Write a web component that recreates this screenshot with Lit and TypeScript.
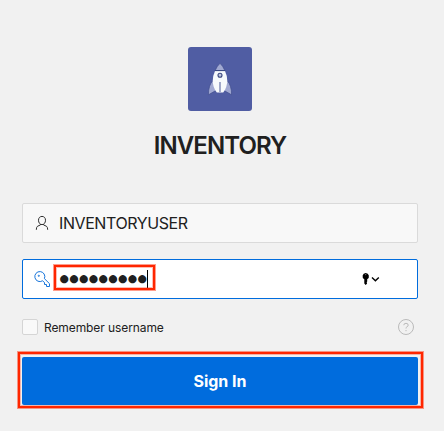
import { LitElement, html, css } from "lit";
import { customElement, property } from "lit/decorators.js";

@customElement("app-root")
export class AppRoot extends LitElement {
  @property() username = "INVENTORYUSER";
  @property({ type: Number }) passwordLength = 9;

  static styles = css`
    :host {
      display: flex;
      flex-direction: column;
      box-sizing: border-box;
      height: 431px;
      padding: 47px 26px 0 22px;
      background: #f1f1f1;
      color: #202020;
      font-family: Inter, "Liberation Sans", sans-serif;
      overflow: hidden;
    }
    * { box-sizing: border-box; }
    svg { display: block; flex: none; }
    .logo {
      width: 64px;
      height: 64px;
      align-self: center;
      border-radius: 3px;
      background: #505da3;
    }
    h1 {
      margin: 19px 0 41px;
      height: 32px;
      text-align: center;
      font-size: 24px;
      line-height: 32px;
      font-weight: 600;
      letter-spacing: -0.9px;
      white-space: nowrap;
    }
    .field {
      position: relative;
      display: flex;
      align-items: center;
      height: 40px;
      margin-bottom: 16px;
      padding: 0 37px 0 11px;
      border: 1px solid #dadada;
      border-radius: 2px;
      background: #f8f8f8;
      font-size: 16px;
      white-space: nowrap;
    }
    .field.focused {
      border-color: #006cdd;
      background: #fff;
    }
    .value { margin-left: 9px; flex: 1; letter-spacing: -0.42px; }
    .dots {
      display: flex;
      align-items: center;
      margin-left: 9.4px;
      flex: 1;
      font: 10.8px/20px "DejaVu Sans", sans-serif;
    }
    .dots b { width: 9.75px; font-weight: 400; text-align: center; }
    .caret { width: 1px; height: 18px; margin-left: -0.4px; background: #000; }
    .mark {
      position: absolute;
      border: 2px solid #ff2600;
      box-shadow: 0 0 0 1px rgba(255, 38, 0, 0.45), inset 0 0 0 1px rgba(255, 38, 0, 0.3);
      pointer-events: none;
    }
    .mark.password { left: 31px; top: 5px; width: 101px; height: 25px; }
    .options {
      display: flex;
      align-items: center;
      height: 16px;
      margin: 4px 4px 0 0;
      font-size: 12px;
    }
    .check {
      width: 16px;
      height: 16px;
      border: 1px solid #d5d5d5;
      border-radius: 2px;
      background: #f9f9f9;
    }
    .label { margin-left: 6px; flex: 1; letter-spacing: -0.09px; }
    .submit {
      position: relative;
      display: flex;
      align-items: center;
      justify-content: center;
      height: 48px;
      margin-top: 22px;
      border-radius: 2px;
      background: #006cdd;
      color: #fff;
      font-size: 16px;
      font-weight: 700;
    }
    .mark.button { left: -4px; top: -5px; right: -5px; bottom: -3px; }
  `;

  render() {
    return html`
      <svg class="logo" viewBox="0 0 64 64">
        <path d="M27.1 23.6Q29 19 32 16.3Q35 19 36.9 23.6ZM25 33.5Q20.4 38 20.4 47.8L28 43.5ZM39 33.5Q43.6 38 43.6 47.8L36 43.5Z" fill="#a1a9d2" stroke="#414d8c" stroke-width=".7"/>
        <path d="M27 24H37Q39.2 28.5 39.3 34Q39 41 35.2 45.5H28.8Q25 41 24.7 34Q24.8 28.5 27 24Z" fill="#f7fafc"/>
        <path d="M26.8 23.6H37.2" stroke="#39477f"/>
        <circle cx="32" cy="28.3" r="2" fill="#c1c7df" stroke="#39477f" stroke-width="1.1"/>
        <path d="M32 35V45" stroke="#7b86b5" stroke-width="1.4"/>
      </svg>
      <h1>INVENTORY</h1>
      <div class="field">
        <svg width="16" height="16" viewBox="0 0 16 16" fill="none" stroke="#303030">
          <path d="M8 1.4C6 1.4 4.5 2.8 4.5 5.2C4.5 7.8 6 9.6 8 9.6S11.5 7.8 11.5 5.2C11.5 2.8 10 1.4 8 1.4ZM6.4 9.1V10L3.6 11.2Q2.3 12 2.3 14.8M9.6 9.1V10L12.4 11.2Q13.7 12 13.7 14.8"/>
        </svg>
        <span class="value">${this.username}</span>
      </div>
      <div class="field focused">
        <svg width="16" height="16" viewBox="0 0 16 16" fill="none" stroke="#1674da">
          <path d="M10.4 7.6L15.5 12.7V15.5H12.5V13.5H10.5V11.5L8.5 9.8A5 5 0 1 1 10.4 7.6Z"/>
          <circle cx="4.8" cy="4.8" r=".6"/>
        </svg>
        <span class="dots">${Array.from({ length: this.passwordLength }, () => html`<b>●</b>`)}<i class="caret"></i></span>
        <svg width="19" height="14" viewBox="0 0 19 14">
          <path d="M4.7 1A3.3 3.3 0 0 0 3.3 7.2V11.5L4.7 13L6.1 11.5L5.7 10.3L6.2 9.4V7.2A3.3 3.3 0 0 0 4.7 1Z" fill="#000"/>
          <circle cx="4.7" cy="2.6" r=".7" fill="#777"/>
          <path d="M11 5.5L14.4 8.8L17.8 5.5" fill="none" stroke="#000" stroke-width="1.4"/>
        </svg>
        <i class="mark password"></i>
      </div>
      <div class="options">
        <span class="check"></span>
        <span class="label">Remember username</span>
        <svg width="16" height="16" viewBox="0 0 16 16" fill="none" stroke="#bababa">
          <circle cx="8" cy="8" r="7.5"/>
          <path d="M5.8 6.2Q5.8 4.3 8 4.3T10.2 6.2Q10.2 7.3 8.9 7.8Q8 8.2 8 9.5M8 11V12.2"/>
        </svg>
      </div>
      <div class="submit">Sign In<i class="mark button"></i></div>
    `;
  }
}
